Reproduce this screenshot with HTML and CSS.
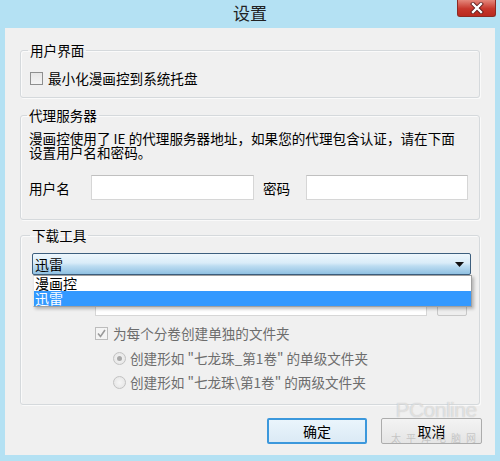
FILE: index.html
```html
<!DOCTYPE html>
<html lang="zh-CN">
<head>
    <meta charset="UTF-8">
    <title>设置</title>
    <link rel="stylesheet" href="styles.css">
</head>
<body>
    <div class="window">
        <div class="titlebar">
            <span class="title">设置</span>
            <span class="close">
                <svg width="14" height="12" viewBox="0 0 14 12">
                    <path d="M3 2 L11 10 M11 2 L3 10" stroke="#5a1a1a" stroke-width="4" stroke-linecap="square"/>
                    <path d="M3 2 L11 10 M11 2 L3 10" stroke="#ffffff" stroke-width="2.4" stroke-linecap="square"/>
                </svg>
            </span>
        </div>
        <div class="client">
            <fieldset class="group g-ui">
                <legend>用户界面</legend>
                <label class="check"><span class="box"></span>最小化漫画控到系统托盘</label>
            </fieldset>

            <fieldset class="group g-proxy">
                <legend>代理服务器</legend>
                <p class="desc">漫画控使用了 IE 的代理服务器地址，如果您的代理包含认证，请在下面<br>设置用户名和密码。</p>
                <div class="cred-row">
                    <span class="cred-label user-label">用户名</span>
                    <span class="input user"></span>
                    <span class="cred-label pass-label">密码</span>
                    <span class="input pass"></span>
                </div>
            </fieldset>

            <fieldset class="group g-dl">
                <legend>下载工具</legend>
                <div class="combo">
                    <div class="combo-box">
                        <span>迅雷</span>
                        <svg class="arrow" width="9" height="5" viewBox="0 0 9 5"><path d="M0 0 H9 L4.5 5 Z" fill="#111"/></svg>
                    </div>
                    <ul class="combo-list">
                        <li>漫画控</li>
                        <li class="sel">迅雷</li>
                    </ul>
                </div>
                <div class="path-row">
                    <span class="path-label"></span>
                    <span class="input path"></span>
                    <span class="browse"></span>
                </div>
                <label class="check sub disabled">
                    <span class="box">
                        <svg width="11" height="11" viewBox="0 0 11 11"><path d="M2 5.5 L4.5 8.5 L9 2" fill="none" stroke="#9a9a9a" stroke-width="1.6"/></svg>
                    </span>为每个分卷创建单独的文件夹
                </label>
                <label class="radio disabled"><span class="dot on"></span>创建形如 "七龙珠_第1卷" 的单级文件夹</label>
                <label class="radio disabled"><span class="dot"></span>创建形如 "七龙珠\第1卷" 的两级文件夹</label>
            </fieldset>

            <div class="buttons">
                <button class="btn default">确定</button>
                <button class="btn">取消</button>
            </div>
        </div>

        <div class="watermark">
            <span class="wm-logo">PConline</span>
            <span class="wm-sub">太平洋电脑网</span>
        </div>
    </div>
</body>
</html>
```

FILE: styles.css
```css
:root {
    --frame-color: #b4e1f3;
    --client-background: #f0f0f0;
    --group-border: #d5d9dc;
    --disabled-text: #6d6d6d;
    --select-blue: #3399ff;
}
body {
    margin: 0;
    font-family: "Noto Sans CJK SC", "Liberation Sans", sans-serif;
    font-size: 13.6px;
    color: #000;
}
.window {
    position: relative;
    width: 500px;
    height: 461px;
    background-color: var(--frame-color);
    overflow: hidden;
}
.titlebar {
    height: 28px;
    display: flex;
    justify-content: center;
    position: relative;
}
.title {
    font-size: 17px;
    line-height: 25px;
    color: #222;
}
.close {
    position: absolute;
    top: 0;
    right: 4px;
    width: 39px;
    height: 17px;
    background: linear-gradient(to bottom, #e4877b, #c7372c 55%, #b92a20);
    border: 1px solid #8c2a22;
    border-top: none;
    box-sizing: border-box;
    border-radius: 0 0 3px 3px;
    display: flex;
    justify-content: center;
    align-items: center;
}
.client {
    margin: 0 5px;
    height: 427px;
    box-sizing: border-box;
    background-color: var(--client-background);
    padding: 15px 15px 0;
}
.group {
    margin: 0;
    border: 1px solid var(--group-border);
    border-radius: 3px;
    box-shadow: inset 1px 1px 0 #fafafa, 1px 1px 0 #fafafa;
    padding: 0 8px;
}
.group legend {
    padding: 0 2px;
    margin-left: -2px;
    line-height: 14px;
}
.g-ui {
    padding: 13px 9px 11px;
}
.g-proxy {
    margin-top: 10px;
    padding: 9px 11px 19px 8px;
}
.g-dl {
    margin-top: 8px;
    padding: 11px 8px 14px 11px;
}
.check, .radio {
    display: flex;
    align-items: center;
    line-height: 16px;
    height: 16px;
}
.check .box {
    width: 13px;
    height: 13px;
    box-sizing: border-box;
    border: 1px solid #8e8f8f;
    background: linear-gradient(to bottom, #e6e6e6, #f4f4f4);
    margin-right: 5px;
    display: flex;
    justify-content: center;
    align-items: center;
}
.disabled {
    color: var(--disabled-text);
}
.check.disabled .box {
    border-color: #bcbcbc;
    background: #f4f4f4;
}
.desc {
    margin: 0;
    line-height: 14px;
}
.cred-row {
    display: flex;
    align-items: center;
    margin-top: 16px;
}
.cred-label {
    line-height: 16px;
}
.user-label {
    width: 62px;
}
.pass-label {
    width: 43px;
    margin-left: 9px;
}
.input {
    display: block;
    height: 25px;
    box-sizing: border-box;
    background-color: #fff;
    border: 1px solid #d6d6d6;
    border-top-color: #c0c0c0;
}
.user {
    width: 163px;
}
.pass {
    width: 162px;
}
.combo {
    position: relative;
    z-index: 2;
}
.combo-box {
    height: 22px;
    box-sizing: border-box;
    border: 1px solid #3d5f7e;
    border-radius: 2px;
    background: linear-gradient(to bottom, #eef7fd 0%, #d9ecf8 45%, #bcdcf1 60%, #90c1e2 100%);
    display: flex;
    align-items: center;
    justify-content: space-between;
    padding: 0 6px 0 2px;
    font-size: 14px;
}
.combo-list {
    position: absolute;
    top: 100%;
    left: 1px;
    right: -1px;
    margin: 0;
    padding: 0;
    list-style: none;
    background-color: #fff;
    border: 1px solid #a0a0a0;
    border-left-color: #e8e8e8;
    box-shadow: 2px 2px 3px rgba(0, 0, 0, 0.25);
}
.combo-list li {
    height: 15px;
    line-height: 15px;
    padding-left: 1px;
    font-size: 14px;
}
.combo-list li.sel {
    background-color: var(--select-blue);
    color: #fff;
}
.path-row {
    display: flex;
    align-items: center;
    margin-top: 19px;
    margin-left: -3px;
}
.path-label {
    width: 66px;
    height: 1px;
}
.path {
    width: 332px;
    height: 22px;
}
.browse {
    width: 30px;
    height: 22px;
    margin-left: 10px;
    box-sizing: border-box;
    border: 1px solid #c8c8c8;
    border-radius: 2px;
    background-color: #eeeeee;
}
.check.sub {
    margin-top: 9px;
    margin-left: 63px;
}
.radio {
    margin-top: 9px;
    margin-left: 81px;
}
.radio + .radio {
    margin-top: 8px;
}
.dot {
    width: 13px;
    height: 13px;
    box-sizing: border-box;
    border-radius: 50%;
    border: 1px solid #c2c2c2;
    background: radial-gradient(circle, #f6f6f6, #e2e2e2);
    margin-right: 4px;
    display: flex;
    justify-content: center;
    align-items: center;
}
.dot.on::after {
    content: '';
    width: 5px;
    height: 5px;
    border-radius: 50%;
    background-color: #a8a8a8;
}
.buttons {
    display: flex;
    justify-content: flex-end;
    gap: 14px;
    margin-top: 13px;
    margin-right: -2px;
}
.btn {
    width: 101px;
    height: 26px;
    font-family: inherit;
    font-size: 14px;
    color: #000;
    border: 1px solid #acacac;
    border-radius: 2px;
    background: linear-gradient(to bottom, #f3f3f3, #e5e5e5);
    padding: 0;
}
.btn.default {
    width: 100px;
    border: 2px solid #3c98dc;
    background: linear-gradient(to bottom, #eaf5fc, #dbeaf5);
}
.watermark {
    position: absolute;
    left: 390px;
    top: 398px;
    width: 92px;
    display: flex;
    flex-direction: column;
    align-items: center;
    pointer-events: none;
}
.wm-logo {
    font-family: "Liberation Sans", sans-serif;
    font-size: 21px;
    line-height: 24px;
    color: rgba(255, 255, 255, 0.5);
    text-shadow: 0 0 1px rgba(150, 150, 150, 0.6);
    letter-spacing: -0.5px;
}
.wm-sub {
    font-size: 10px;
    line-height: 12px;
    color: rgba(160, 160, 160, 0.5);
    letter-spacing: 5px;
    margin-top: 10px;
    white-space: nowrap;
}
```
